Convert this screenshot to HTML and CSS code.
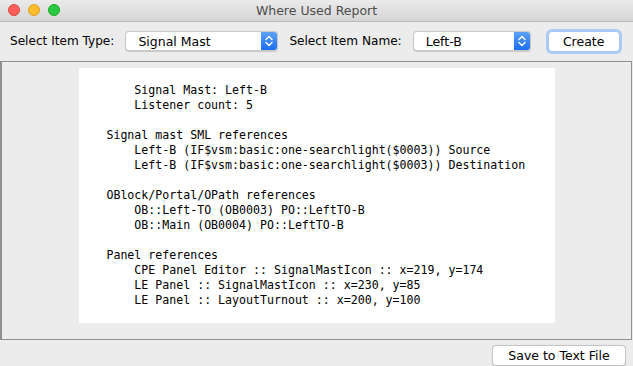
FILE: index.html
```html
<!DOCTYPE html>
<html>
<head>
<meta charset="utf-8">
<link rel="stylesheet" href="styles.css">
</head>
<body>
<div class="window">
  <div class="titlebar">
    <div class="lights">
      <span class="light red"></span>
      <span class="light yellow"></span>
      <span class="light green"></span>
    </div>
    <div class="title">Where Used Report</div>
  </div>
  <div class="toolbar">
    <span class="label">Select Item Type:</span>
    <div class="combo combo-type">
      <span class="combo-text">Signal Mast</span>
      <span class="combo-arrow"><svg width="8" height="12" viewBox="0 0 8 12"><path d="M1 4.5 L4 1.5 L7 4.5 M1 7.5 L4 10.5 L7 7.5" fill="none" stroke="#fff" stroke-width="1.4" stroke-linecap="round" stroke-linejoin="round"/></svg></span>
    </div>
    <span class="label label-name">Select Item Name:</span>
    <div class="combo combo-name">
      <span class="combo-text">Left-B</span>
      <span class="combo-arrow"><svg width="8" height="12" viewBox="0 0 8 12"><path d="M1 4.5 L4 1.5 L7 4.5 M1 7.5 L4 10.5 L7 7.5" fill="none" stroke="#fff" stroke-width="1.4" stroke-linecap="round" stroke-linejoin="round"/></svg></span>
    </div>
    <button class="btn btn-create">Create</button>
  </div>
  <div class="panel">
    <pre class="report">

        Signal Mast: Left-B
        Listener count: 5

    Signal mast SML references
        Left-B (IF$vsm:basic:one-searchlight($0003)) Source
        Left-B (IF$vsm:basic:one-searchlight($0003)) Destination

    OBlock/Portal/OPath references
        OB::Left-TO (OB0003) PO::LeftTO-B
        OB::Main (OB0004) PO::LeftTO-B

    Panel references
        CPE Panel Editor :: SignalMastIcon :: x=219, y=174
        LE Panel :: SignalMastIcon :: x=230, y=85
        LE Panel :: LayoutTurnout :: x=200, y=100
</pre>
  </div>
  <div class="footer">
    <button class="btn btn-save">Save to Text File</button>
  </div>
</div>
</body>
</html>
```

FILE: styles.css
```css
html, body {
  margin: 0;
  padding: 0;
}
body {
  width: 633px;
  height: 366px;
  overflow: hidden;
  background: #ececec;
  font-family: "DejaVu Sans", "Liberation Sans", sans-serif;
  color: #000;
}
.window {
  display: flex;
  flex-direction: column;
  height: 366px;
}
.titlebar {
  height: 21px;
  border-bottom: 1px solid #b9b9b9;
  background: linear-gradient(#ebebeb, #d5d5d5);
  display: flex;
  align-items: center;
  position: relative;
}
.lights {
  display: flex;
  gap: 8px;
  padding-left: 8px;
}
.light {
  width: 12px;
  height: 12px;
  border-radius: 50%;
  box-sizing: border-box;
}
.red { background: #fc5f57; border: 1px solid #df4744; }
.yellow { background: #fdbc2e; border: 1px solid #dea123; }
.green { background: #28c840; border: 1px solid #1aab29; }
.title {
  position: absolute;
  left: 0;
  right: 0;
  text-align: center;
  font-size: 12.5px;
  color: #4d4d4d;
  pointer-events: none;
}
.toolbar {
  height: 39px;
  display: flex;
  align-items: center;
  padding-left: 10px;
  font-size: 12.1px;
}
.label { white-space: nowrap; }
.combo {
  margin-left: 11px;
  height: 20px;
  box-sizing: border-box;
  background: #fff;
  border: 1px solid #c8c8c8;
  border-radius: 4px;
  display: flex;
  align-items: center;
  overflow: hidden;
  box-shadow: 0 0.5px 1px rgba(0,0,0,0.15);
}
.combo-type { width: 153px; }
.combo-name { width: 118px; }
.combo-text {
  flex: 1;
  padding-left: 12px;
  font-size: 12.5px;
}
.combo-arrow {
  width: 16px;
  align-self: stretch;
  background: linear-gradient(#5ea1f8, #1a6ef5);
  display: flex;
  align-items: center;
  justify-content: center;
}
.label-name { margin-left: 11px; }
.btn {
  font-family: inherit;
  font-size: 12.5px;
  background: #fff;
  border: 1px solid #c5c5c5;
  border-radius: 4px;
  height: 21px;
  padding: 0;
  color: #000;
  box-shadow: 0 0.5px 1px rgba(0,0,0,0.15);
}
.btn-create {
  margin-left: 17px;
  width: 72px;
  border: 1px solid #a8c8f4;
  box-shadow: 0 0 0 2px #a9cbf5;
  border-radius: 4px;
}
.panel {
  height: 273px;
  margin-right: 1px;
  border: 1px solid #8f8f8f;
  border-left-width: 2px;
  background: #ececec;
  display: flex;
  justify-content: center;
  align-items: flex-start;
  padding-top: 6px;
}
.report {
  margin: 0;
  width: 476px;
  height: 255px;
  box-sizing: border-box;
  background: #fff;
  font-family: "DejaVu Sans Mono", monospace;
  font-size: 11.6px;
  line-height: 15px;
  padding-top: 0;
}
.footer {
  flex: 1;
  display: flex;
  justify-content: flex-end;
  align-items: flex-start;
  padding-top: 5px;
  padding-right: 7px;
}
.btn-save {
  width: 134px;
}
```
